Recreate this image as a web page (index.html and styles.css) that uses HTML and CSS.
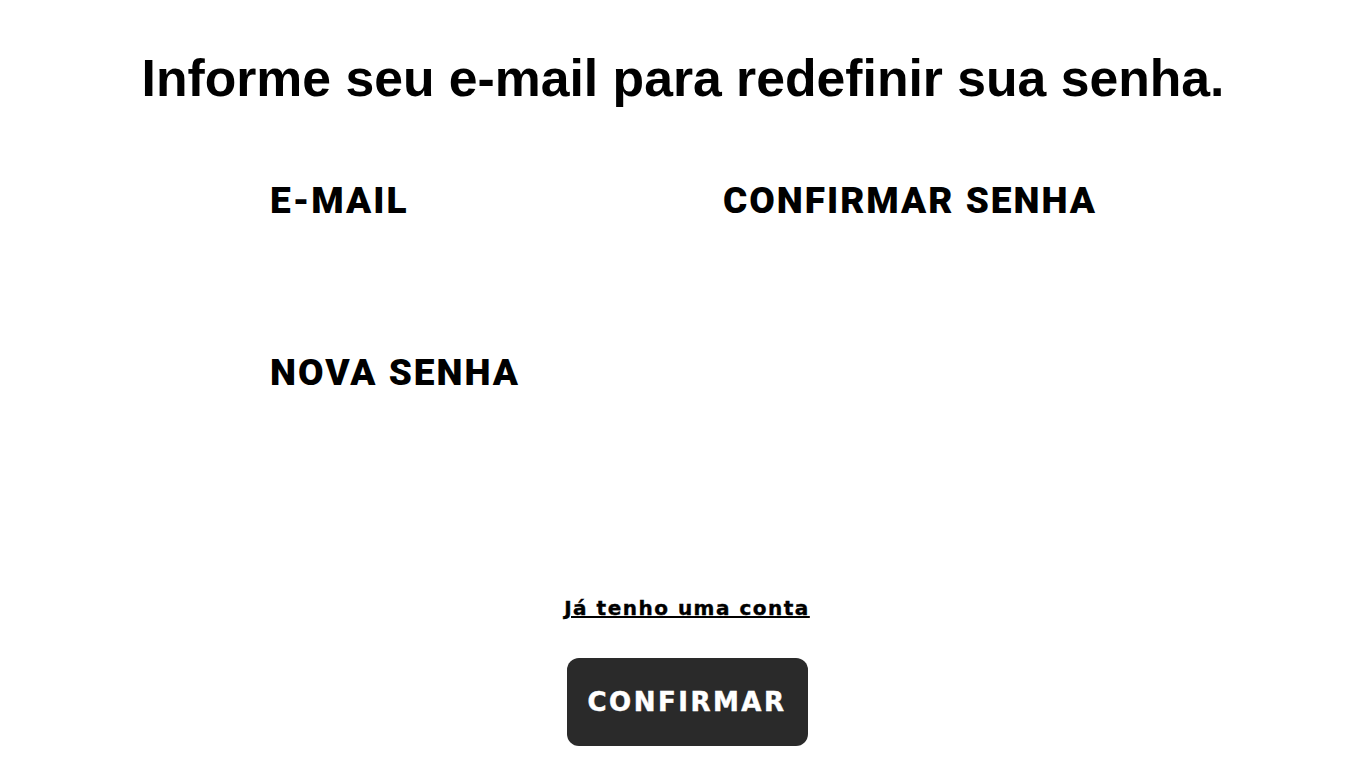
FILE: index.html
```html
<!DOCTYPE html>
<html lang="pt-BR">
<head>
<meta charset="utf-8">
<title>Redefinir senha</title>
<link rel="stylesheet" href="styles.css">
</head>
<body>
<main class="page">
  <h1 class="title">Informe seu e-mail para redefinir sua senha.</h1>
  <form class="form">
    <div class="grid">
      <label class="field">
        <span class="label">E-MAIL</span>
        <input class="input" type="email">
      </label>
      <label class="field">
        <span class="label">CONFIRMAR SENHA</span>
        <input class="input" type="password">
      </label>
      <label class="field">
        <span class="label">NOVA SENHA</span>
        <input class="input" type="password">
      </label>
    </div>
    <a class="link" href="#">Já tenho uma conta</a>
    <button class="btn" type="button">CONFIRMAR</button>
  </form>
</main>
</body>
</html>
```
FILE: styles.css
```css
html, body {
  margin: 0;
  padding: 0;
  background: #fff;
  color: #000;
}
.page {
  display: flex;
  flex-direction: column;
  align-items: center;
}
.title {
  font-family: "Liberation Sans", Arial, sans-serif;
  font-weight: 700;
  font-size: 51.7px;
  line-height: 60px;
  margin: 48px 0 0;
}
.form {
  display: flex;
  flex-direction: column;
  align-items: center;
  width: 826px;
}
.grid {
  display: grid;
  grid-template-columns: 373px 373px;
  column-gap: 80px;
  width: 100%;
  margin-top: 71px;
}
.field {
  display: flex;
  flex-direction: column;
  height: 172px;
}
.label {
  font-family: Roboto, "Liberation Sans", sans-serif;
  font-weight: 900;
  font-size: 37px;
  line-height: 43px;
  letter-spacing: 2px;
  white-space: nowrap;
}
.input {
  border: none;
  outline: none;
  background: transparent;
  height: 40px;
  padding: 0;
  font-size: 20px;
}
.link {
  font-family: "DejaVu Sans", sans-serif;
  font-weight: 700;
  font-size: 20px;
  line-height: 24px;
  letter-spacing: 1.5px;
  -webkit-text-stroke: 0.4px #000;
  color: #000;
  text-decoration: underline;
  text-decoration-thickness: 2px;
  margin: 73px 0 0 8px;
}
.btn {
  margin: 38px 0 0 8px;
  width: 241px;
  height: 88px;
  border: none;
  border-radius: 12px;
  background: #2a2a2a;
  color: #fff;
  font-family: "DejaVu Sans", sans-serif;
  font-weight: 700;
  font-size: 26px;
  letter-spacing: 2.5px;
  -webkit-text-stroke: 0.5px #fff;
  padding: 0;
  cursor: pointer;
}
```
